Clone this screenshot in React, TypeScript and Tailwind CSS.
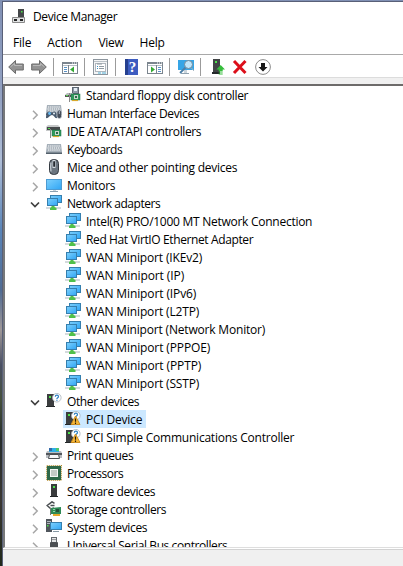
import React, { useLayoutEffect, useRef, useState } from 'react';

// Text run whose tracking is adjusted so that it occupies the given width.
function Label({ text, width }: { text: string; width: number }) {
  const ref = useRef<HTMLSpanElement>(null);
  const [spacing, setSpacing] = useState(0);
  useLayoutEffect(() => {
    if (ref.current) {
      ref.current.style.letterSpacing = '0px';
      const natural = ref.current.getBoundingClientRect().width;
      const value = (width + 0.2 - natural) / text.length;
      ref.current.style.letterSpacing = `${value}px`;
      setSpacing(value);
    }
  }, [text, width]);
  return (
    <span ref={ref} className="shrink-0 whitespace-nowrap" style={{ letterSpacing: spacing }}>
      {text}
    </span>
  );
}

function Icon({ children }: { children: React.ReactNode }) {
  return (
    <svg width="16" height="16" viewBox="0 0 16 16" className="block shrink-0">
      {children}
    </svg>
  );
}

const Board = () => (
  <g>
    <rect x="6" y="7" width="9" height="6" fill="#2f9a5c" stroke="#1d6c43" strokeWidth=".5" />
    <rect x="9" y="8" width="4" height="4" fill="#c9d8cf" />
    <rect x="10" y="9" width="2" height="2" fill="#2c6947" />
    <path d="M7 13.500h6" stroke="#d9a92c" strokeWidth="1.200" />
    <path d="M4.500 6v9" stroke="#8a8a8a" />
  </g>
);

const Floppy = () => (
  <Icon>
    <rect x="7.500" y="0.500" width="6" height="6" fill="#8e99a6" stroke="#5b6570" />
    <rect x="9" y="1" width="3" height="3" fill="#e4edf5" />
    <path d="M0 8l2-2h6v4H0z" fill="#babdbf" />
    <rect x="0" y="8" width="8" height="2" fill="#555" />
    <rect x="1" y="8" width="2" height="1" fill="#58db54" />
    <Board />
  </Icon>
);

const Drive = () => (
  <Icon>
    <path d="M0 4l2-2h10l2 2v4H0z" fill="#c6c8c9" />
    <rect x="1" y="4" width="13" height="3" fill="#474a4c" />
    <rect x="2" y="5" width="2" height="1" fill="#58db54" />
    <Board />
  </Icon>
);

const KeyboardShape = ({ y }: { y: number }) => (
  <g transform={`translate(0 ${y})`}>
    <path d="M1 0h14l1 8v2H0V8z" fill="#a6b0b9" />
    <path d="M0 8.500h16V10H0z" fill="#53606b" />
    <path d="M2 2h12M1.500 4h13M2 6h12" stroke="#fff" strokeWidth="1.100" strokeDasharray="1.300 .8" />
  </g>
);

const Hid = () => (
  <Icon>
    <KeyboardShape y={0} />
    <path d="M0 13c0-4 1-6.500 3-6.500l3 1 2-1c2 0 3 2.500 3 6.500-2 1-3-3-5-3s-4 4-6 3z" fill="#47596d" />
    <circle cx="3.500" cy="8.500" r="1.400" fill="#67b9f2" />
    <circle cx="8" cy="8.500" r="1" fill="#e9f0f5" />
    <rect x="11" y="5" width="4.600" height="8.500" rx="2.300" fill="#454d59" stroke="#cfd5dc" strokeWidth=".7" />
    <path d="M13.300 6v3" stroke="#aab6c5" />
  </Icon>
);

const Keyboard = () => (
  <Icon>
    <KeyboardShape y={3} />
  </Icon>
);

const Mouse = () => (
  <Icon>
    <rect x="3.500" y="0.500" width="9" height="15" rx="4" fill="#6b757f" stroke="#343a41" />
    <path d="M5 3.500c-.5 3-.5 6 0 9" fill="none" stroke="#c2cad1" strokeWidth="1.300" />
    <path d="M8 1v8" stroke="#d3dae0" strokeWidth="3" />
    <rect x="7.200" y="2" width="1.800" height="6" rx=".9" fill="#252a30" />
  </Icon>
);

const BlueGradient = ({ id }: { id: string }) => (
  <linearGradient id={id} x1="0" y1="0" x2="1" y2="1">
    <stop offset="0" stopColor="#7dd0fc" />
    <stop offset="1" stopColor="#2fa5f5" />
  </linearGradient>
);

const Monitor = () => (
  <Icon>
    <defs>
      <BlueGradient id="mon" />
    </defs>
    <rect x=".5" y="2.500" width="15" height="10" fill="url(#mon)" stroke="#4d9bd2" />
    <path d="M4 14.500h8" stroke="#8ea2b1" />
    <path d="M7 13.500h3" stroke="#c9d4dc" />
  </Icon>
);

const Network = () => (
  <Icon>
    <defs>
      <BlueGradient id="net" />
    </defs>
    <rect x="4.500" y=".5" width="11" height="7" fill="url(#net)" stroke="#367fae" />
    <rect x="1.500" y="3.500" width="10" height="7" fill="url(#net)" stroke="#367fae" />
    <path d="M0 13h15" stroke="#d5dadd" strokeWidth="2" />
    <path d="M5.500 11h3v1l2 1v2H4v-2l1.500-1z" fill="#50c04b" />
  </Icon>
);

const Tower = () => (
  <g>
    <path d="M1 1h7v12H1z" fill="#3c3e40" />
    <path d="M0 13h9v1H0z" fill="#24282a" />
    <rect x="3" y="3" width="2" height="2" fill="#4ce34a" />
  </g>
);

const Question = () => (
  <g>
    <circle cx="10.800" cy="4.700" r="4.300" fill="#fff" stroke="#a9b4bc" strokeWidth=".8" />
    <path d="M9.300 3.700c0-2 3.200-2 3.200 0 0 1.200-1.600 1.100-1.600 2.300" fill="none" stroke="#2b7fc3" strokeWidth="1.200" />
    <rect x="10.300" y="6.700" width="1.200" height="1.100" fill="#2b7fc3" />
  </g>
);

const Other = () => (
  <Icon>
    <Tower />
    <Question />
  </Icon>
);

const Unknown = () => (
  <Icon>
    <Tower />
    <Question />
    <path d="M10.500 5L15 13.500H6z" fill="#f8b737" stroke="#c98a1c" strokeWidth=".9" strokeLinejoin="round" />
    <path d="M10.500 7.500v3.300M10.500 11.600v1.300" stroke="#251b08" strokeWidth="1.200" />
  </Icon>
);

const Printer = () => (
  <Icon>
    <path d="M1 4h14l1 2v5H0V6z" fill="#b9bdc1" />
    <path d="M3 1h10v4H3z" fill="#2eb1e8" />
    <path d="M3 1h3v3H3z" fill="#3268a9" />
    <path d="M10 1h3v3h-3z" fill="#51c66c" />
    <path d="M0 6h16v2H0z" fill="#52575d" />
    <path d="M3.500 7.500h9l1 4h-11z" fill="#f6f7f8" stroke="#4a4e52" />
  </Icon>
);

const Processor = () => (
  <Icon>
    <rect x=".75" y=".75" width="14.500" height="14.500" fill="none" stroke="#b58f31" strokeWidth="1.500" strokeDasharray="1 1" />
    <rect x="1" y="1" width="14" height="14" fill="#2e6849" />
    <rect x="4.500" y="4.500" width="7" height="7" fill="#c4cbc7" stroke="#f5f7f5" />
  </Icon>
);

const Software = () => (
  <Icon>
    <path d="M5 1h6v12H5z" fill="#393b3d" />
    <path d="M4 13h8v1H4z" fill="#222527" />
    <rect x="7" y="3" width="2" height="2" fill="#4ce34a" />
  </Icon>
);

const Storage = () => (
  <Icon>
    <path d="M8.500 2.300L6 .8 1.200 4.500 5 8l3-1M4.500 4.500h4" fill="none" stroke="#4b4f52" strokeWidth="1.500" />
    <path d="M4.500 7v7" stroke="#777" />
    <path d="M5 7l10-1v7H5z" fill="#2f8a56" />
    <rect x="10" y="8" width="3" height="3" fill="#244f38" />
    <path d="M7 8.500h2M7 10.500h2" stroke="#8ed5a8" />
    <path d="M7 14h7" stroke="#e5a82a" strokeWidth="2" />
  </Icon>
);

const System = () => (
  <Icon>
    <defs>
      <BlueGradient id="sys" />
    </defs>
    <path d="M0 0h6v13H0z" fill="#50565c" />
    <path d="M1 2.500h4M1 4.500h4" stroke="#aeb8bf" />
    <rect x="1" y="6" width="1.500" height="1.500" fill="#4ce34a" />
    <rect x="4.500" y="3.500" width="11" height="7" fill="url(#sys)" stroke="#367fae" />
    <path d="M7 12.500h6" stroke="#8799a5" />
  </Icon>
);

const Usb = () => (
  <Icon>
    <rect x="5.500" y=".5" width="5" height="5" fill="#e2e4e5" stroke="#656a6e" />
    <path d="M6.500 2.500h1M8.500 2.500h1" stroke="#555" />
    <rect x="4" y="5" width="8" height="10" rx="1" fill="#4b4f52" />
  </Icon>
);

type Row = {
  text: string;
  width: number;
  icon: React.ComponentType;
  state?: 'open' | 'closed';
  selected?: boolean;
};

const rows: Row[] = [
  { text: 'Standard floppy disk controller', width: 162, icon: Floppy },
  { text: 'Human Interface Devices', width: 132, icon: Hid, state: 'closed' },
  { text: 'IDE ATA/ATAPI controllers', width: 134, icon: Drive, state: 'closed' },
  { text: 'Keyboards', width: 55, icon: Keyboard, state: 'closed' },
  { text: 'Mice and other pointing devices', width: 170, icon: Mouse, state: 'closed' },
  { text: 'Monitors', width: 48, icon: Monitor, state: 'closed' },
  { text: 'Network adapters', width: 93, icon: Network, state: 'open' },
  { text: 'Intel(R) PRO/1000 MT Network Connection', width: 226, icon: Network },
  { text: 'Red Hat VirtIO Ethernet Adapter', width: 167, icon: Network },
  { text: 'WAN Miniport (IKEv2)', width: 116, icon: Network },
  { text: 'WAN Miniport (IP)', width: 98, icon: Network },
  { text: 'WAN Miniport (IPv6)', width: 110, icon: Network },
  { text: 'WAN Miniport (L2TP)', width: 113, icon: Network },
  { text: 'WAN Miniport (Network Monitor)', width: 179, icon: Network },
  { text: 'WAN Miniport (PPPOE)', width: 124, icon: Network },
  { text: 'WAN Miniport (PPTP)', width: 115, icon: Network },
  { text: 'WAN Miniport (SSTP)', width: 113, icon: Network },
  { text: 'Other devices', width: 72, icon: Other, state: 'open' },
  { text: 'PCI Device', width: 56, icon: Unknown, selected: true },
  { text: 'PCI Simple Communications Controller', width: 208, icon: Unknown },
  { text: 'Print queues', width: 66, icon: Printer, state: 'closed' },
  { text: 'Processors', width: 56, icon: Processor, state: 'closed' },
  { text: 'Software devices', width: 88, icon: Software, state: 'closed' },
  { text: 'Storage controllers', width: 99, icon: Storage, state: 'closed' },
  { text: 'System devices', width: 80, icon: System, state: 'closed' },
  { text: 'Universal Serial Bus controllers', width: 160, icon: Usb, state: 'closed' },
];

function Chevron({ open }: { open: boolean }) {
  return (
    <svg width="10" height="10" viewBox="0 0 10 10" className="mt-[3px] mr-1.5 block shrink-0">
      {open ? (
        <path d="M1 2.500l4 4 4-4" fill="none" stroke="#404040" strokeWidth="1.700" />
      ) : (
        <path d="M3 .8L7.200 5 3 9.200" fill="none" stroke="#a6a6a6" strokeWidth="1.500" />
      )}
    </svg>
  );
}

function TreeRow({ row }: { row: Row }) {
  const Glyph = row.icon;
  return (
    <div className={`flex h-[18px] shrink-0 items-center ${row.state ? 'pl-[25px]' : 'pl-[58px]'}`}>
      {row.state && <Chevron open={row.state === 'open'} />}
      <div
        className={`flex h-[18px] items-center gap-[5px] ${row.selected ? 'bg-[#cce8ff] pr-1' : ''} ${row.state ? '' : 'pl-[2px]'}`}
      >
        <Glyph />
        <div className="flex pt-px">
          <Label text={row.text} width={row.width} />
        </div>
      </div>
    </div>
  );
}

const Divider = () => <div className="h-[18px] w-px shrink-0 bg-[#9b9b9b]" />;

const Arrow = ({ flip }: { flip?: boolean }) => (
  <svg width="16" height="16" viewBox="0 0 16 16" className={`block shrink-0 ${flip ? '-scale-x-100' : ''}`}>
    <path d="M.7 8L7.500 1.500v3.500h7.800v6H7.500v3.500z" fill="#939393" stroke="#6c6c6c" strokeLinejoin="round" />
    <path d="M2.500 8l4-3.500V6.500h7.500" fill="none" stroke="#b9b9b9" />
  </svg>
);

const Pane = ({ right }: { right?: boolean }) => (
  <Icon>
    <rect x=".5" y="3.500" width="15" height="11" fill="#fff" stroke="#7b858e" />
    <path d="M0 4h16" stroke="#7b858e" strokeWidth="2" />
    <path d="M10 4h1M12 4h1M14 4h1" stroke="#fff" />
    <path d="M1 6.500h14" stroke="#b5bdc4" />
    {right ? (
      <g>
        <path d="M9.500 6v8" stroke="#7b858e" />
        <path d="M11 8.500h3M11 10.500h3M11 12.500h3" stroke="#5a92c6" />
        <path d="M4 7.500l4 3-4 3z" fill="#35a935" />
      </g>
    ) : (
      <g>
        <path d="M6.500 6v8" stroke="#7b858e" />
        <path d="M2 8.500h3M2 10.500h3M2 12.500h3" stroke="#5a92c6" />
        <path d="M12 7.500l-4 3 4 3z" fill="#35a935" />
      </g>
    )}
  </Icon>
);

function Toolbar() {
  return (
    <div className="flex h-6 shrink-0 items-center border-t border-b border-t-[#a9a9a9] border-b-[#dcdcdc] pt-[2px] pl-[5px]">
      <Arrow />
      <div className="w-[7px] shrink-0" />
      <Arrow flip />
      <div className="w-1.5 shrink-0" />
      <Divider />
      <div className="w-2 shrink-0" />
      <Pane />
      <div className="w-1.5 shrink-0" />
      <Divider />
      <div className="w-2 shrink-0" />
      <Icon>
        <rect x=".5" y=".5" width="14" height="15" fill="#f4f5f6" stroke="#8c959d" />
        <path d="M1 2.500h13" stroke="#bac1c7" />
        <rect x="2.500" y="4.500" width="10" height="8" fill="#fff" stroke="#b0b7be" />
        <path d="M4 7.500h1M4 9.500h1" stroke="#3d91c6" />
        <path d="M6 7.500h5M6 9.500h5M4 5h5" stroke="#909aa2" />
        <path d="M5 14h3M9 14h4" stroke="#50b0d6" />
      </Icon>
      <div className="w-1.5 shrink-0" />
      <Divider />
      <div className="w-[7px] shrink-0" />
      <svg width="16" height="16" viewBox="0 0 16 16" className="block shrink-0">
        <rect x="2" y="0" width="13" height="16" fill="#3d5cc0" />
        <path d="M2 0h3v16H2z" fill="#25408f" />
        <text x="9.500" y="13" textAnchor="middle" fontSize="15" fontFamily="Liberation Serif, serif" fontWeight="700" fill="#fff">?</text>
      </svg>
      <div className="w-2 shrink-0" />
      <Pane right />
      <div className="w-1.5 shrink-0" />
      <Divider />
      <div className="w-2 shrink-0" />
      <Icon>
        <rect x="0" y="1" width="16" height="10" fill="#36a5e6" />
        <path d="M3 14.500h8" stroke="#8fa2b0" />
        <path d="M6 11h3v3H6z" fill="#cbd5dc" />
        <path d="M7.500 8.500L2 14" stroke="#4b7fa8" strokeWidth="1.800" />
        <circle cx="10.500" cy="5.500" r="4" fill="#bfe6fb" stroke="#71899b" />
        <path d="M13.500 9l2.500 3" stroke="#a5b5c0" />
      </Icon>
      <div className="w-1.5 shrink-0" />
      <Divider />
      <div className="w-[10px] shrink-0" />
      <Icon>
        <path d="M2 0h7v13H2z" fill="#414446" />
        <path d="M1 13h8v2H1z" fill="#24282a" />
        <rect x="4" y="2" width="2" height="2" fill="#4ce34a" />
        <path d="M9.700 6L14 10.500h-2.300V12H7.700v-1.500H5.400z" fill="#35bd3b" />
        <path d="M7.700 13h4M7.700 15h4" stroke="#35bd3b" strokeWidth="1.200" />
      </Icon>
      <div className="w-[5px] shrink-0" />
      <Icon>
        <path d="M2 2l11.500 12M13.500 2L2 14" stroke="#dc0f1a" strokeWidth="3" />
      </Icon>
      <div className="w-[7px] shrink-0" />
      <Icon>
        <circle cx="8" cy="8" r="7.400" fill="#fff" stroke="#8c8c8c" />
        <path d="M6 4h4v4h2.500L8 12.500 3.500 8H6z" fill="#171717" />
      </Icon>
    </div>
  );
}

export default function App() {
  return (
    <div className="flex h-[566px] w-[403px] overflow-hidden bg-[linear-gradient(#8090b4,#94a3c3_100px,#aebdd6_160px,#5a85b8_230px,#506c94_290px,#9e9797_330px,#4a5064_365px,#45503c_400px,#262d2c_440px,#3b3834_500px,#20291a)] font-['Open_Sans','Noto_Sans',sans-serif] text-[12px] leading-[18px] text-black">
      <div className="mt-px ml-[2px] flex min-w-0 flex-1 flex-col border-t border-l border-[#596078] bg-white">
        <div className="flex h-[28px] shrink-0 items-center gap-[5px] pt-[2px] pl-[9px]">
          <Icon>
            <path d="M6 0h6v9H6z" fill="#45484a" />
            <rect x="9" y="2" width="1.500" height="1.500" fill="#4ce34a" />
            <path d="M.5 8.500h12v5H.5z" fill="#dfe1e2" stroke="#8a8a8a" />
            <path d="M2 10h3v2H2zM8 10h3v2H8z" fill="#222" />
          </Icon>
          <Label text="Device Manager" width={84} />
        </div>
        <div className="flex h-6 shrink-0 items-center gap-4 pt-[2px] pl-[10px]">
          <Label text="File" width={18} />
          <Label text="Action" width={35} />
          <Label text="View" width={25} />
          <Label text="Help" width={25} />
        </div>
        <Toolbar />
        <div className="h-1.5 shrink-0 bg-[#f0f0f0]" />
        <div className="flex h-[464px] shrink-0 flex-col overflow-hidden border-t-2 border-b border-l-2 border-t-[#6d6b6a] border-b-[#dedede] border-l-[#77797b] bg-white">
          {rows.map((row) => (
            <TreeRow key={row.text} row={row} />
          ))}
        </div>
        <div className="h-px shrink-0 bg-white" />
        <div className="flex-1 border-t border-[#d2d2d2] bg-[#f0f0f0]" />
      </div>
    </div>
  );
}
